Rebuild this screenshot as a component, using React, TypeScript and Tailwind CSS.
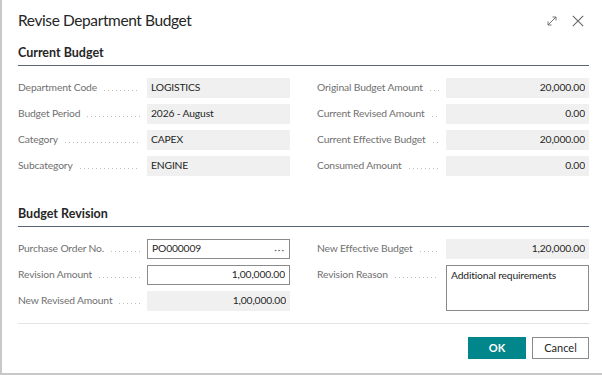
import React from 'react';

type Field = {
  label: string;
  value: string;
  align?: 'left' | 'right';
  kind?: 'readonly' | 'input' | 'lookup' | 'textarea';
};

const currentLeft: Field[] = [
  { label: 'Department Code', value: 'LOGISTICS' },
  { label: 'Budget Period', value: '2026 - August' },
  { label: 'Category', value: 'CAPEX' },
  { label: 'Subcategory', value: 'ENGINE' },
];

const currentRight: Field[] = [
  { label: 'Original Budget Amount', value: '20,000.00', align: 'right' },
  { label: 'Current Revised Amount', value: '0.00', align: 'right' },
  { label: 'Current Effective Budget', value: '20,000.00', align: 'right' },
  { label: 'Consumed Amount', value: '0.00', align: 'right' },
];

const revisionLeft: Field[] = [
  { label: 'Purchase Order No.', value: 'PO000009', kind: 'lookup' },
  { label: 'Revision Amount', value: '1,00,000.00', align: 'right', kind: 'input' },
  { label: 'New Revised Amount', value: '1,00,000.00', align: 'right' },
];

const revisionRight: Field[] = [
  { label: 'New Effective Budget', value: '1,20,000.00', align: 'right' },
  { label: 'Revision Reason', value: 'Additional requirements', kind: 'textarea' },
];

const FieldRow: React.FC<{ field: Field }> = ({ field }) => {
  const kind = field.kind ?? 'readonly';
  const box =
    kind === 'readonly'
      ? 'bg-[#f0f0f0] h-[20px] items-center'
      : kind === 'textarea'
      ? 'bg-white border border-[#8a8a8a] h-[46px] items-start pt-[2px]'
      : 'bg-white border border-[#8a8a8a] h-[20px] items-center';

  return (
    <div className="flex items-start">
      <div className="w-[129px] shrink-0 flex items-center h-[20px] pr-[7px]">
        <span className="text-[10.3px] tracking-[-0.15px] text-[#707070] whitespace-nowrap">{field.label}</span>
        <span className="flex-1 ml-[7px] mt-[4px] h-px bg-[linear-gradient(to_right,#bdbdbd_1px,transparent_1px)] bg-[length:4px_1px] bg-repeat-x" />
      </div>
      <div className={`flex-1 flex px-[4px] text-[10.3px] tracking-[-0.15px] text-[#1f1f1f] ${box}`}>
        <span className={`flex-1 truncate ${field.align === 'right' ? 'text-right' : 'text-left'}`}>{field.value}</span>
        {kind === 'lookup' && <span className="text-[#555] text-[10px] tracking-[1px] pl-2">···</span>}
      </div>
    </div>
  );
};

const Section: React.FC<{ title: string; left: Field[]; right: Field[] }> = ({ title, left, right }) => (
  <section>
    <h2 className="text-[12.5px] font-bold text-[#262626] leading-[16px] pb-[4px] border-b-[1.5px] border-[#5b6677]">{title}</h2>
    <div className="grid grid-cols-2 gap-x-[27px] pt-[12px]">
      <div className="flex flex-col gap-[6px]">
        {left.map(f => <FieldRow key={f.label} field={f} />)}
      </div>
      <div className="flex flex-col gap-[6px]">
        {right.map(f => <FieldRow key={f.label} field={f} />)}
      </div>
    </div>
  </section>
);

const App: React.FC = () => {
  return (
    <div className="w-[602px] h-[375px] bg-white font-['Lato',sans-serif] border-l-2 border-b-2 border-[#c8c8c8] overflow-hidden">
      <div className="pl-[16px] pr-[11px] pt-[10px]">
        <header className="flex items-center justify-between h-[22px] pr-[7px]">
          <h1 className="text-[15.5px] tracking-[-0.4px] text-[#262626]">Revise Department Budget</h1>
          <div className="flex items-center gap-[15px] text-[#666]">
            <svg width="10" height="10" viewBox="0 0 10 10" fill="none" stroke="currentColor" strokeWidth="0.9">
              <path d="M1 9 L9 1 M5.5 1 H9 V4.5 M1 5.5 V9 H4.5" />
            </svg>
            <svg width="12" height="12" viewBox="0 0 12 12" fill="none" stroke="currentColor" strokeWidth="1.1">
              <path d="M0.8 0.8 L11.2 11.2 M11.2 0.8 L0.8 11.2" />
            </svg>
          </div>
        </header>
        <div className="pr-[2px] pt-[13px] flex flex-col gap-[30px]">
          <Section title="Current Budget" left={currentLeft} right={currentRight} />
          <Section title="Budget Revision" left={revisionLeft} right={revisionRight} />
        </div>
        <div className="mt-[12px] mr-[2px] border-t border-[#e3e3e3] flex justify-end gap-[6px] pt-[13px]">
          <button className="w-[58px] h-[22px] bg-[#00868b] text-white text-[11px] font-bold">OK</button>
          <button className="w-[57px] h-[22px] bg-white border border-[#8a8a8a] text-[#262626] text-[11px]">Cancel</button>
        </div>
      </div>
    </div>
  );
};

export default App;
